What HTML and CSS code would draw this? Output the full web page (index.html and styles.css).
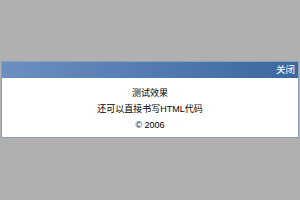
FILE: index.html
```html
<!DOCTYPE html>
<html lang="zh-CN">
<head>
    <meta charset="UTF-8">
    <title>测试效果</title>
    <link rel="stylesheet" href="styles.css">
</head>
<body>
    <div class="dialog">
        <div class="dialog-bar">
            <a href="#" class="dialog-close">关闭</a>
        </div>
        <div class="dialog-body">
            <p>测试效果</p>
            <p>还可以直接书写HTML代码</p>
            <p>&copy; 2006</p>
        </div>
    </div>
</body>
</html>
```

FILE: styles.css
```css
body {
    margin: 0;
    padding-top: 61px;
    background-color: #b0b0b0;
    font-family: Arial, "Liberation Sans", "Noto Sans CJK SC", sans-serif;
    font-size: 9px;
}
.dialog {
    margin: 0 1px;
    background: #fff;
    border: 1px solid #8d9fb7;
}
.dialog-bar {
    height: 16px;
    background: linear-gradient(to right, #6b8fc1, #3b689f);
    text-align: right;
    padding: 0 3px;
}
.dialog-close {
    color: #fff;
    text-decoration: none;
    line-height: 16px;
    font-size: 9.5px;
}
.dialog-body {
    text-align: center;
    padding: 7px 0 4px;
    color: #000;
}
.dialog-body p {
    margin: 0;
    line-height: 16px;
}
```
